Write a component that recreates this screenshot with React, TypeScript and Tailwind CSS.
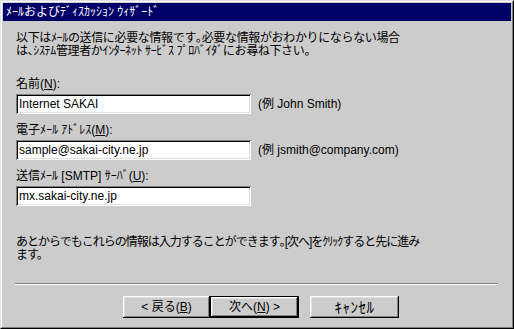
import React from 'react';

const font = "font-['Liberation_Sans','Noto_Sans_CJK_JP',sans-serif]";

const sunken =
  'shadow-[inset_1px_1px_0_#808080,inset_-1px_-1px_0_#ffffff,inset_2px_2px_0_#000000,inset_-2px_-2px_0_#dfdfdf]';
const raised =
  'shadow-[inset_-1px_-1px_0_#000000,inset_1px_1px_0_#ffffff,inset_-2px_-2px_0_#808080,inset_2px_2px_0_#dfdfdf]';

const Field: React.FC<{ label: React.ReactNode; value: string; hint?: string; first?: boolean }> = ({
  label,
  value,
  hint,
  first,
}) => (
  <div className={first ? 'mt-[20px]' : 'mt-[10px]'}>
    <div className="h-[13px] leading-[13px]">{label}</div>
    <div className="mt-[3px] flex items-center">
      <div className={`w-[235px] h-[20px] bg-white ${sunken} pl-[3px] flex items-center leading-[13px]`}>
        {value}
      </div>
      {hint && <span className="ml-[7px] leading-[13px]">{hint}</span>}
    </div>
  </div>
);

const Button: React.FC<{ children: React.ReactNode; isDefault?: boolean; className?: string }> = ({
  children,
  isDefault,
  className = '',
}) =>
  isDefault ? (
    <div className={`w-[89px] h-[22px] border border-black ${className}`}>
      <div className={`w-full h-full ${raised} flex items-center justify-center leading-[13px]`}>{children}</div>
    </div>
  ) : (
    <div className={`w-[87px] h-[22px] ${raised} flex items-center justify-center leading-[13px] ${className}`}>
      {children}
    </div>
  );

const App: React.FC = () => {
  return (
    <div className={`w-[514px] h-[329px] ${font} text-[12px] text-black`}>
      <div className="w-full h-full border border-t-[#dfdfdf] border-l-[#dfdfdf] border-r-black border-b-black">
        <div className="w-full h-full border border-t-white border-l-white border-r-[#808080] border-b-[#808080] bg-[#cccccc] p-px flex flex-col">
          {/* Title bar */}
          <div className="h-[18px] bg-[#000066] text-white flex items-center pl-[3px] leading-[13px]">
            ﾒｰﾙおよびﾃﾞｨｽｶｯｼｮﾝ ｳｨｻﾞｰﾄﾞ
          </div>

          <div className="pl-[13px] pr-[13px] flex-1 flex flex-col">
            <div className="mt-[11px] leading-[13px] tracking-[-0.35px]">
              以下はﾒｰﾙの送信に必要な情報です｡必要な情報がおわかりにならない場合
              <br />
              は､ｼｽﾃﾑ管理者かｲﾝﾀｰﾈｯﾄ ｻｰﾋﾞｽ ﾌﾟﾛﾊﾞｲﾀﾞにお尋ね下さい。
            </div>

            <Field
              first
              label={
                <>
                  名前(<span className="underline">N</span>):
                </>
              }
              value="Internet SAKAI"
              hint="(例 John Smith)"
            />
            <Field
              label={
                <>
                  電子ﾒｰﾙ ｱﾄﾞﾚｽ(<span className="underline">M</span>):
                </>
              }
              value="sample@sakai-city.ne.jp"
              hint="(例 jsmith@company.com)"
            />
            <Field
              label={
                <>
                  送信ﾒｰﾙ [SMTP] ｻｰﾊﾞ(<span className="underline">U</span>):
                </>
              }
              value="mx.sakai-city.ne.jp"
            />

            <div className="mt-[30px] leading-[13px] tracking-[-1px]">
              あとからでもこれらの情報は入力することができます｡[次へ]をｸﾘｯｸすると先に進み
              <br />
              ます。
            </div>
          </div>

          {/* Separator */}
          <div className="ml-[12px] mr-[13px] border-t border-t-[#808080] border-b border-b-white" />

          <div className="h-[41px] flex items-start pl-[120px] pt-[11px]">
            <Button>&lt; 戻る(<span className="underline">B</span>)</Button>
            <Button isDefault>
              次へ(<span className="underline">N</span>) &gt;
            </Button>
            <Button className="ml-[11px] w-[89px]">
              <span className="text-[15px] tracking-[0.5px]">ｷｬﾝｾﾙ</span>
            </Button>
          </div>
        </div>
      </div>
    </div>
  );
};

export default App;
